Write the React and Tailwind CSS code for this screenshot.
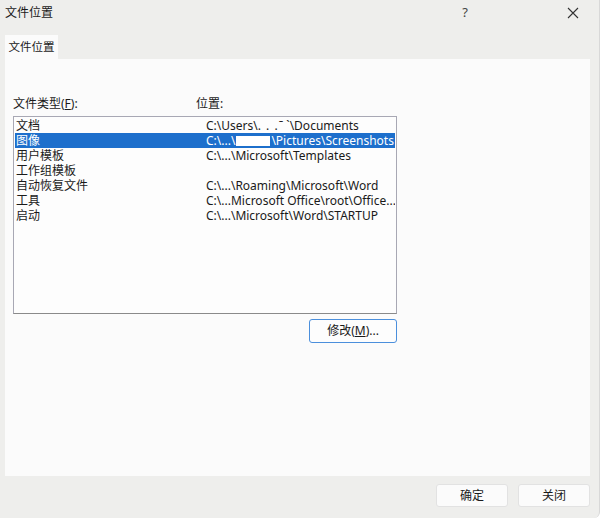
const ROWS = [
    { type: "文档",         path: <>C:\Users\<span className="tracking-[1px]">. . .</span> ˉ `\Documents</> },
    { type: "图像",         path: "C:\\...\\",  redacted: true, selected: true },
    { type: "用户模板",     path: "C:\\...\\Microsoft\\Templates" },
    { type: "工作组模板",   path: "" },
    { type: "自动恢复文件", path: "C:\\...\\Roaming\\Microsoft\\Word" },
    { type: "工具",         path: "C:\\...Microsoft Office\\root\\Office..." },
    { type: "启动",         path: "C:\\...\\Microsoft\\Word\\STARTUP" },
];

const FONT = "font-['Segoe_UI','Noto_Sans','Noto_Sans_CJK_SC',sans-serif]";

export default function App() {
    return (
        <div className={`w-[600px] h-[518px] bg-[#eeeeec] text-[12px] text-[#1a1a1a] flex flex-col border-r border-[#d8d8d8] rounded-br-md overflow-hidden ${FONT}`}>
            {/* Title bar */}
            <div className="h-[26px] flex items-center pl-[5px] shrink-0">
                <span className="flex-1 leading-none">文件位置</span>
                <span className="w-[20px] text-center text-[13px] mr-[92px] text-[#444]">?</span>
                <svg width="12" height="12" viewBox="0 0 12 12" className="mr-[20px]">
                    <path d="M1 1 L11 11 M11 1 L1 11" stroke="#333" strokeWidth="1.1" />
                </svg>
            </div>

            {/* Tab strip */}
            <div className="h-[33px] flex items-end pl-[5px] shrink-0">
                <div className="h-[24px] w-[53px] bg-[#fbfbfb] flex items-center justify-center text-[11.5px]">文件位置</div>
            </div>

            {/* Tab panel */}
            <div className="ml-[5px] mr-[9px] h-[417px] bg-[#fbfbfb] px-[8px] pt-[36px] shrink-0">
                <div className="flex h-[21px] items-start">
                    <span className="w-[183px] shrink-0">文件类型(<span className="underline">F</span>):</span>
                    <span>位置:</span>
                </div>
                <div className="w-[384px] h-[198px] border border-[#a8a8b4] border-b-[#8a8a8a] bg-[#fdfdfd] pt-[1px] px-[1px] overflow-hidden">
                    {ROWS.map((r) => (
                        <div
                            key={r.type}
                            className={`h-[15px] flex leading-[15px] overflow-hidden ${r.selected ? "bg-[#1d6fcc] text-white" : ""}`}
                        >
                            <span className="w-[191px] shrink-0 pl-[1px]">{r.type}</span>
                            <span className="whitespace-nowrap flex items-center">
                                {r.path}
                                {r.redacted && (
                                    <>
                                        <span className="inline-block w-[34px] h-[10px] bg-white ml-[1px] mr-[1px]" />
                                        \Pictures\Screenshots
                                    </>
                                )}
                            </span>
                        </div>
                    ))}
                </div>
                <div className="flex justify-end w-[384px] mt-[5px]">
                    <button className="w-[88px] h-[24px] border border-[#4b8fdc] rounded-[3px] bg-[#fdfdfd] flex items-center justify-center">
                        修改(<span className="underline">M</span>)...
                    </button>
                </div>
            </div>

            {/* Footer buttons */}
            <div className="flex justify-end gap-[10px] pr-[9px] pt-[8px]">
                <button className="w-[72px] h-[23px] bg-[#fbfbfb] border border-[#e2e2e2] rounded-[3px] flex items-center justify-center">确定</button>
                <button className="w-[72px] h-[23px] bg-[#fbfbfb] border border-[#e2e2e2] rounded-[3px] flex items-center justify-center">关闭</button>
            </div>
        </div>
    );
}
